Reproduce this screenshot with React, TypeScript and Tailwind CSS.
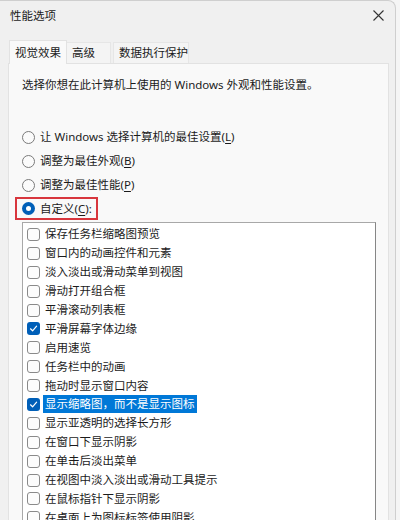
import React from "react";

const font = {
  fontFamily: '"Noto Sans", "Noto Sans CJK SC", sans-serif',
};

const options = [
  { label: "保存任务栏缩略图预览", checked: false },
  { label: "窗口内的动画控件和元素", checked: false },
  { label: "淡入淡出或滑动菜单到视图", checked: false },
  { label: "滑动打开组合框", checked: false },
  { label: "平滑滚动列表框", checked: false },
  { label: "平滑屏幕字体边缘", checked: true },
  { label: "启用速览", checked: false },
  { label: "任务栏中的动画", checked: false },
  { label: "拖动时显示窗口内容", checked: false },
  { label: "显示缩略图，而不是显示图标", checked: true, selected: true },
  { label: "显示亚透明的选择长方形", checked: false },
  { label: "在窗口下显示阴影", checked: false },
  { label: "在单击后淡出菜单", checked: false },
  { label: "在视图中淡入淡出或滑动工具提示", checked: false },
  { label: "在鼠标指针下显示阴影", checked: false },
  { label: "在桌面上为图标标签使用阴影", checked: false },
];

function Radio({ on }: { on?: boolean }) {
  if (on) {
    return (
      <span className="flex h-[13px] w-[13px] shrink-0 items-center justify-center rounded-full bg-[#005fb8]">
        <span className="h-[5px] w-[5px] rounded-full bg-white" />
      </span>
    );
  }
  return <span className="h-[13px] w-[13px] shrink-0 rounded-full border border-[#7a7a7a] bg-[#fbfbfb]" />;
}

function Checkbox({ on }: { on?: boolean }) {
  if (on) {
    return (
      <span className="flex h-[13px] w-[13px] shrink-0 items-center justify-center rounded-[3px] bg-[#005fb8]">
        <svg width="9" height="9" viewBox="0 0 9 9" fill="none">
          <path d="M1.5 4.8 L3.6 6.8 L7.6 2.2" stroke="white" strokeWidth="1.2" strokeLinecap="round" strokeLinejoin="round" />
        </svg>
      </span>
    );
  }
  return <span className="h-[13px] w-[13px] shrink-0 rounded-[3px] border border-[#8a8a8a] bg-[#fcfcfc]" />;
}

// 助记符下划线
function Mnemonic({ text, k }: { text: string; k: string }) {
  return (
    <span>
      {text}(<span className="underline underline-offset-2">{k}</span>)
    </span>
  );
}

export default function App() {
  return (
    <div className="h-[520px] w-[400px] overflow-hidden bg-[#f5f5f5] text-[11.5px] text-[#1b1b1b]" style={font}>
      <div className="flex h-[530px] w-[396px] flex-col rounded-tr-[8px] border-r border-t border-[#cfcfcf] bg-[#f0f0f0]">
        {/* 标题栏 */}
        <div className="flex h-[29px] items-center justify-between pl-[10px] pr-[11px]">
          <span>性能选项</span>
          <svg width="11" height="11" viewBox="0 0 11 11" stroke="#333" strokeWidth="1.1">
            <path d="M0.5 0.5 L10.5 10.5 M10.5 0.5 L0.5 10.5" />
          </svg>
        </div>

        {/* 标签页 */}
        <div className="mt-[10px] flex h-[23px] items-end pl-[9px]">
          <div className="relative z-10 -mb-px flex h-[24px] w-[58px] items-center border border-b-0 border-[#e2e2e2] bg-[#f9f9f9] pl-[5px]">
            视觉效果
          </div>
          <div className="flex h-[21px] w-[44px] items-center border-t border-r border-[#e6e6e6] bg-[#f4f4f4] pl-[5px]">
            高级
          </div>
          <div className="ml-[2px] flex h-[21px] w-[76px] items-center border-t border-x border-[#e6e6e6] bg-[#f4f4f4] pl-[5px]">
            数据执行保护
          </div>
        </div>

        {/* 内容面板 */}
        <div className="ml-[8px] flex w-[381px] flex-1 flex-col border border-[#e2e2e2] bg-[#f9f9f9] pl-[13px] pt-[13px]">
          <p className="leading-[16px]">选择你想在此计算机上使用的 Windows 外观和性能设置。</p>

          <div className="mt-[32px] flex flex-col">
            <label className="flex h-[24px] items-center gap-[5px]">
              <Radio />
              <Mnemonic text="让 Windows 选择计算机的最佳设置" k="L" />
            </label>
            <label className="flex h-[24px] items-center gap-[5px]">
              <Radio />
              <Mnemonic text="调整为最佳外观" k="B" />
            </label>
            <label className="flex h-[24px] items-center gap-[5px]">
              <Radio />
              <Mnemonic text="调整为最佳性能" k="P" />
            </label>
            <label className="-ml-[7px] flex h-[23px] w-[83px] items-center gap-[5px] border-2 border-[#d8363d] pl-[5px]">
              <Radio on />
              <span>
                自定义(<span className="underline underline-offset-2">C</span>):
              </span>
            </label>
          </div>

          {/* 复选列表 */}
          <div className="mt-[2px] w-[354px] flex-1 border border-[#a8a8a8] border-r-[#868686] bg-white pl-[4px] pt-[2px]">
            {options.map((o) => (
              <div key={o.label} className="flex h-[18.9px] items-center gap-[3px]">
                <Checkbox on={o.checked} />
                <span
                  className={
                    o.selected
                      ? "bg-[#0078d7] px-[2px] leading-[18px] text-white"
                      : "px-[2px] leading-[18px]"
                  }
                >
                  {o.label}
                </span>
              </div>
            ))}
          </div>
        </div>
      </div>
    </div>
  );
}
